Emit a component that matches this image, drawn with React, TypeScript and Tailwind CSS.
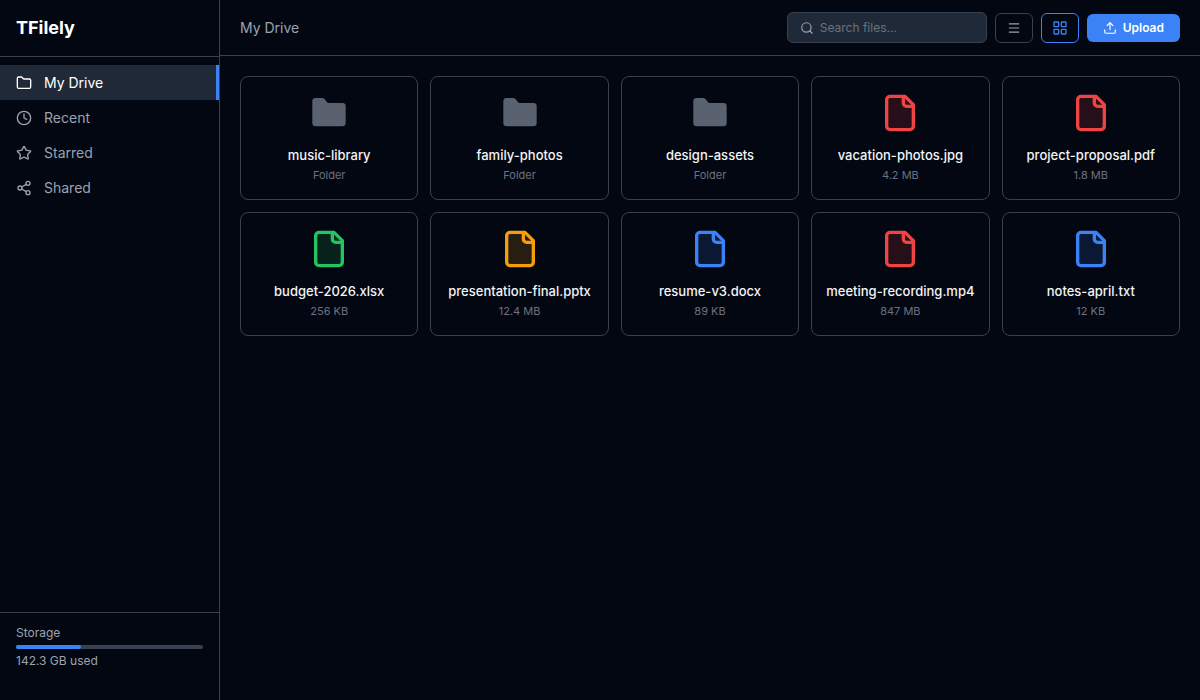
import { Folder, Clock, Star, Share2, Search, Menu, LayoutGrid, Upload } from "lucide-react";

const nav = [
  { label: "My Drive", Icon: Folder, active: true },
  { label: "Recent", Icon: Clock },
  { label: "Starred", Icon: Star },
  { label: "Shared", Icon: Share2 },
];

const items = [
  { name: "music-library", meta: "Folder", kind: "folder" },
  { name: "family-photos", meta: "Folder", kind: "folder" },
  { name: "design-assets", meta: "Folder", kind: "folder" },
  { name: "vacation-photos.jpg", meta: "4.2 MB", kind: "red" },
  { name: "project-proposal.pdf", meta: "1.8 MB", kind: "red" },
  { name: "budget-2026.xlsx", meta: "256 KB", kind: "green" },
  { name: "presentation-final.pptx", meta: "12.4 MB", kind: "amber" },
  { name: "resume-v3.docx", meta: "89 KB", kind: "blue" },
  { name: "meeting-recording.mp4", meta: "847 MB", kind: "red" },
  { name: "notes-april.txt", meta: "12 KB", kind: "blue" },
];

const colors: Record<string, string> = {
  red: "#ef4444",
  green: "#22c55e",
  amber: "#f59e0b",
  blue: "#3b82f6",
};

function FolderIcon() {
  return (
    <svg width="40" height="40" viewBox="0 0 24 24" fill="#6b7280" fillOpacity="0.85" stroke="#6b7280" strokeOpacity="0.85" strokeWidth="0">
      <path d="M20 20a2 2 0 0 0 2-2V8a2 2 0 0 0-2-2h-7.9a2 2 0 0 1-1.69-.9L9.6 3.9A2 2 0 0 0 7.93 3H4a2 2 0 0 0-2 2v13a2 2 0 0 0 2 2Z" />
    </svg>
  );
}

function FileIcon({ color }: { color: string }) {
  return (
    <svg width="40" height="40" viewBox="0 0 24 24" fill="none" stroke={color} strokeWidth="2" strokeLinecap="round" strokeLinejoin="round">
      <path d="M15 2H6a2 2 0 0 0-2 2v16a2 2 0 0 0 2 2h12a2 2 0 0 0 2-2V7Z" fill={color} fillOpacity="0.15" />
      <path d="M14 2v4a2 2 0 0 0 2 2h4" />
    </svg>
  );
}

export default function App() {
  return (
    <div className="flex h-[700px] w-[1200px] overflow-hidden bg-[#030712] font-['Inter',sans-serif] text-white">
      <aside className="flex w-[220px] shrink-0 flex-col border-r border-[#374151]">
        <div className="flex h-[57px] items-center border-b border-[#374151] px-4 text-lg font-bold">TFilely</div>
        <nav className="flex-1 py-2">
          {nav.map(({ label, Icon, active }) => (
            <div
              key={label}
              className={
                active
                  ? "flex h-[35px] items-center gap-3 border-r-[3px] border-[#3b82f6] bg-[#1f2937] px-4 text-sm text-white"
                  : "flex h-[35px] items-center gap-3 px-4 text-sm text-[#9ca3af]"
              }
            >
              <Icon size={16} />
              {label}
            </div>
          ))}
        </nav>
        <div className="h-[88px] border-t border-[#374151] px-4 pt-3 text-xs text-[#9ca3af]">
          <div>Storage</div>
          <div className="mt-1 h-1 rounded-full bg-[#374151]">
            <div className="h-1 w-[35%] rounded-full bg-[#3b82f6]" />
          </div>
          <div className="mt-1">142.3 GB used</div>
        </div>
      </aside>
      <main className="flex min-w-0 flex-1 flex-col">
        <header className="flex h-14 items-center justify-between border-b border-[#374151] px-5">
          <div className="text-sm text-[#9ca3af]">My Drive</div>
          <div className="flex items-center gap-2">
            <div className="flex h-[31px] w-[200px] items-center gap-1.5 rounded-md border border-[#374151] bg-[#1f2937] px-3 text-xs text-[#6b7280]">
              <Search size={14} className="text-[#9ca3af]" />
              Search files...
            </div>
            <button className="flex h-[30px] w-[38px] items-center justify-center rounded-md border border-[#374151] text-[#9ca3af]">
              <Menu size={14} />
            </button>
            <button className="flex h-[30px] w-[38px] items-center justify-center rounded-md border border-[#3b82f6] text-[#3b82f6]">
              <LayoutGrid size={16} />
            </button>
            <button className="flex h-7 items-center gap-1.5 rounded-md bg-[#3b82f6] px-4 text-xs font-semibold text-white">
              <Upload size={14} />
              Upload
            </button>
          </div>
        </header>
        <div className="grid grid-cols-5 gap-3 p-5">
          {items.map((item) => (
            <div key={item.name} className="flex h-[124px] flex-col items-center rounded-lg border border-[#374151] px-3 pt-4 text-center">
              {item.kind === "folder" ? <FolderIcon /> : <FileIcon color={colors[item.kind]} />}
              <div className="mt-3 text-[13px] leading-5 font-medium text-[#f3f4f6]">{item.name}</div>
              <div className="mt-0.5 text-[11px] text-[#6b7280]">{item.meta}</div>
            </div>
          ))}
        </div>
      </main>
    </div>
  );
}
